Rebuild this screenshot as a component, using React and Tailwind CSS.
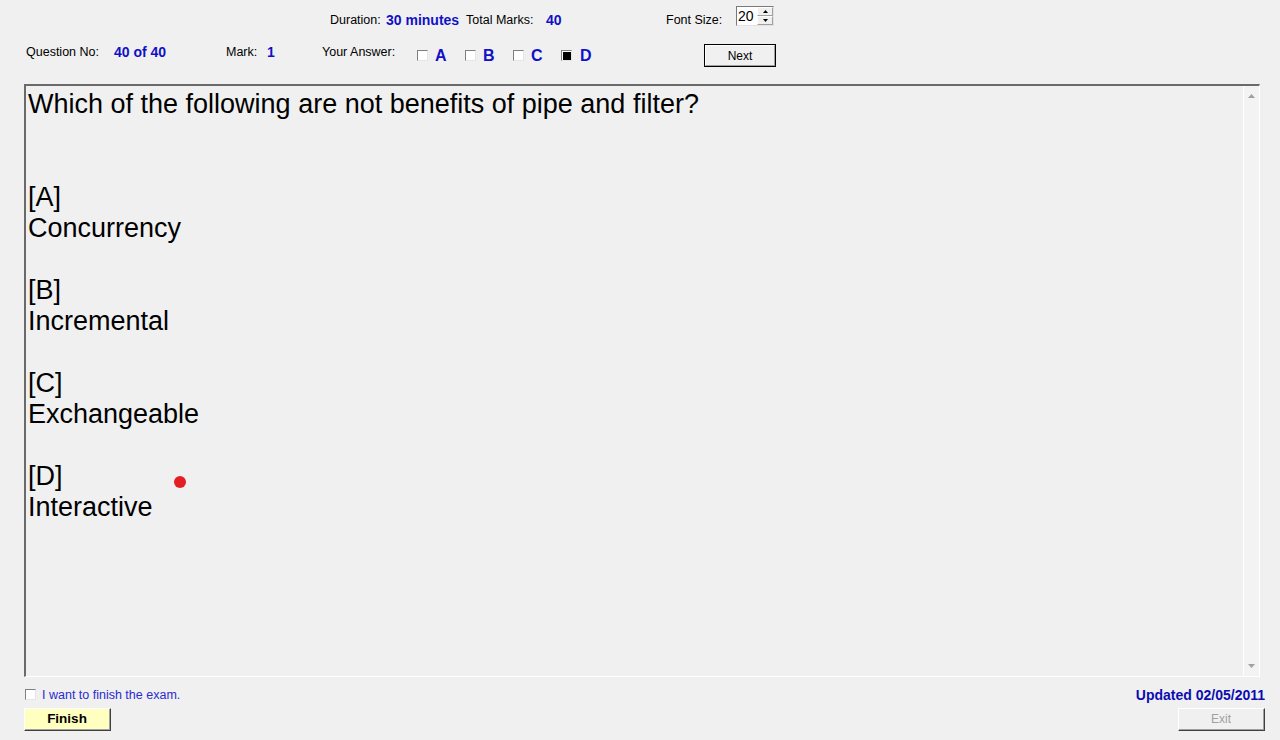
import React from 'react';

const font = { fontFamily: '"Liberation Sans", Arial, sans-serif' };

const Check = ({ checked }) => (
  <div className="w-[11px] h-[11px] bg-white border border-[#7f7f7f] border-b-[#e5e5e5] border-r-[#e5e5e5] flex items-center justify-center shrink-0">
    {checked && <div className="w-[8px] h-[8px] bg-black" />}
  </div>
);

const Arrow = ({ up }) => (
  <svg width="7" height="4" viewBox="0 0 7 4">
    {up ? <path d="M0 4 L3.5 0 L7 4 Z" fill="#a0a0a0" /> : <path d="M0 0 L3.5 4 L7 0 Z" fill="#a0a0a0" />}
  </svg>
);

const App = () => {
  const options = [
    ['A', 'Concurrency'],
    ['B', 'Incremental'],
    ['C', 'Exchangeable'],
    ['D', 'Interactive'],
  ];

  return (
    <div className="w-[1280px] h-[740px] bg-[#f0f0f0] text-black overflow-hidden" style={font}>
      {/* top row */}
      <div className="flex items-start h-[32px] pl-[330px] text-[12.5px] leading-[16px]">
        <div className="w-[56px] mt-[12px]">Duration:</div>
        <div className="w-[80px] mt-[12px] font-bold text-[14px] text-[#1010c8]">30 minutes</div>
        <div className="w-[80px] mt-[12px]">Total Marks:</div>
        <div className="w-[120px] mt-[12px] font-bold text-[14px] text-[#1010c8]">40</div>
        <div className="w-[70px] mt-[12px]">Font Size:</div>
        <div className="mt-[6px] w-[38px] h-[20px] bg-white border border-[#7a7a7a] border-b-[#e3e3e3] border-r-[#e3e3e3] flex">
          <div className="flex-1 text-[14px] leading-[18px] pl-[1px]">20</div>
          <div className="w-[16px] flex flex-col">
            <div className="h-[9px] bg-[#f0f0f0] border border-white border-b-[#a0a0a0] border-r-[#a0a0a0] flex items-center justify-center">
              <svg width="5" height="3" viewBox="0 0 5 3"><path d="M0 3 L2.5 0 L5 3 Z" fill="#000" /></svg>
            </div>
            <div className="h-[9px] bg-[#f0f0f0] border border-white border-b-[#a0a0a0] border-r-[#a0a0a0] flex items-center justify-center">
              <svg width="5" height="3" viewBox="0 0 5 3"><path d="M0 0 L2.5 3 L5 0 Z" fill="#000" /></svg>
            </div>
          </div>
        </div>
      </div>

      {/* second row */}
      <div className="flex items-start h-[52px] pl-[26px] text-[12.5px] leading-[16px]">
        <div className="w-[88px] mt-[12px]">Question No:</div>
        <div className="w-[112px] mt-[12px] font-bold text-[14px] text-[#1010c8]">40 of 40</div>
        <div className="w-[41px] mt-[12px]">Mark:</div>
        <div className="w-[55px] mt-[12px] font-bold text-[14px] text-[#1010c8]">1</div>
        <div className="w-[95px] mt-[12px]">Your Answer:</div>
        {['A', 'B', 'C', 'D'].map((l) => (
          <div key={l} className="w-[48px] flex items-start">
            <div className="mt-[18px]">
              <Check checked={l === 'D'} />
            </div>
            <div className={`mt-[15px] font-bold text-[16px] leading-[18px] text-[#1010c8] ${l === 'D' ? 'ml-[8px]' : 'ml-[7px]'}`}>{l}</div>
          </div>
        ))}
        <div className="ml-[95px] mt-[12px] w-[72px] h-[23px] border border-black bg-[#f0f0f0]">
          <div className="h-full border border-white border-b-[#a0a0a0] border-r-[#a0a0a0] flex items-center justify-center text-[12px]">
            Next
          </div>
        </div>
      </div>

      {/* question box */}
      <div className="ml-[24px] w-[1236px] h-[593px] border-t-2 border-l-2 border-t-[#6a6a6a] border-l-[#6a6a6a] border-b border-r border-b-white border-r-white flex relative">
        <div className="flex-1 pl-[2px] pt-[3px] text-[27px] leading-[31px]">
          <div>Which of the following are not benefits of pipe and filter?</div>
          <div className="h-[62px]" />
          {options.map(([k, v]) => (
            <div key={k} className="mb-[31px]">
              <div>[{k}]</div>
              <div>{v}</div>
            </div>
          ))}
        </div>
        <div className="w-[16px] border-l border-white bg-[#f3f3f3] flex flex-col justify-between items-center py-[8px]">
          <Arrow up />
          <Arrow />
        </div>
        <div className="absolute left-[148px] top-[390px] w-[12px] h-[12px] rounded-full bg-[#e31e24]" />
      </div>

      {/* bottom */}
      <div className="flex justify-between pl-[24px] pr-[15px]">
        <div>
          <div className="flex items-center mt-[11px] h-[12px] pl-[1px]">
            <Check />
            <span className="ml-[6px] text-[12.5px] leading-[16px] mt-[2px] text-[#2b2bd0]">I want to finish the exam.</span>
          </div>
          <div className="mt-[8px] w-[87px] h-[23px] bg-[#ffffc0] border border-white border-b-[#404040] border-r-[#404040]">
            <div className="h-full border-b border-r border-[#a0a0a0] flex items-center justify-center font-bold text-[13.5px]">
              Finish
            </div>
          </div>
        </div>
        <div className="flex flex-col items-end">
          <div className="mt-[10px] h-[16px] leading-[16px] font-bold text-[14px] text-[#0c0cb0]">Updated 02/05/2011</div>
          <div className="mt-[5px] w-[87px] h-[23px] bg-[#f0f0f0] border border-white border-b-[#404040] border-r-[#404040]">
            <div className="h-full border-b border-r border-[#a0a0a0] flex items-center justify-center text-[12px] text-[#a0a0a0]">
              Exit
            </div>
          </div>
        </div>
      </div>
    </div>
  );
};

export default App;
